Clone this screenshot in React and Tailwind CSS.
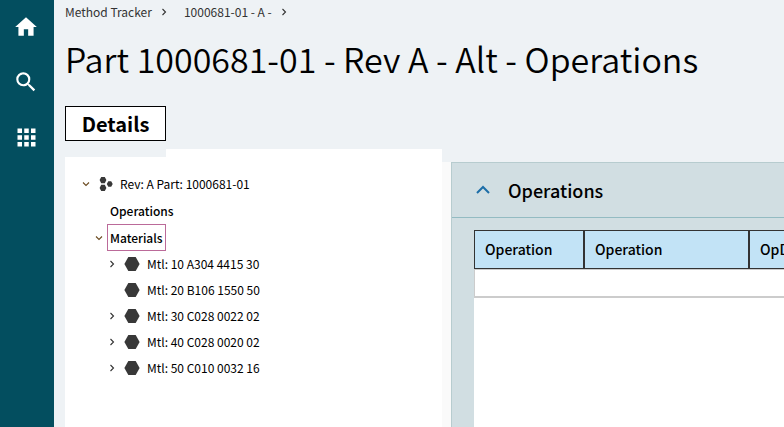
import { useState } from 'react'
import { MdHome, MdSearch, MdApps } from 'react-icons/md'

const MATERIALS = [
  { name: 'Mtl: 10 A304 4415 30', expandable: true },
  { name: 'Mtl: 20 B106 1550 50', expandable: false },
  { name: 'Mtl: 30 C028 0022 02', expandable: true },
  { name: 'Mtl: 40 C028 0020 02', expandable: true },
  { name: 'Mtl: 50 C010 0032 16', expandable: true },
]

const TURN = { right: 'M2.5 1l3 3-3 3', down: 'M1 2.5l3 3 3-3', up: 'M1 5.5l3-3 3 3' }

function Chevron({ dir, size = 8, width = 1.1, className = '' }) {
  return (
    <svg viewBox="0 0 8 8" width={size} height={size} fill="none" stroke="currentColor" strokeWidth={width} className={className} aria-hidden="true">
      <path d={TURN[dir]} />
    </svg>
  )
}

function Hexagon() {
  return (
    <svg viewBox="0 0 16 14" width="16" height="14" fill="#383838" aria-hidden="true">
      <path d="M4.3 0h7.4L15.6 7l-3.9 7H4.3L.4 7z" />
    </svg>
  )
}

// Three linked parts, shown next to the revision root.
function Assembly() {
  return (
    <svg viewBox="0 0 14 14" width="14" height="14" fill="#383838" aria-hidden="true">
      <path d="M2.2 0h3.6l1.6 3.1-1.6 3.1H2.2L.6 3.1zM2.2 7.8h3.6l1.6 3.1L5.8 14H2.2L.6 10.9zM9.3 4.2h2.9L13.7 7l-1.5 2.8H9.3L7.8 7z" />
    </svg>
  )
}

function Sidebar() {
  return (
    <nav className="flex w-[54px] shrink-0 flex-col items-center gap-[29px] bg-[#034e5f] pt-[14px] pr-[2px] text-white">
      <button type="button" aria-label="Home"><MdHome size={26} /></button>
      <button type="button" aria-label="Search"><MdSearch size={26} /></button>
      <button type="button" aria-label="Apps"><MdApps size={27} /></button>
    </nav>
  )
}

function Tree() {
  const [open, setOpen] = useState(true)

  return (
    <ul className="pt-[14px] text-[12px] leading-[26px]">
      <li>
        <div className="flex h-[26px] items-center pl-[17px]">
          <button type="button" aria-label="Collapse revision" className="text-[#6b4a20]"><Chevron dir="down" /></button>
          <span className="ml-[9px]"><Assembly /></span>
          <span className="ml-[7px]">Rev: A Part: 1000681-01</span>
        </div>
        <ul>
          <li className="flex h-[27px] items-center pl-[45px] font-medium">Operations</li>
          <li>
            <div className="flex h-[27px] items-center pl-[30px]">
              <button type="button" aria-label="Toggle materials" className="text-[#6b4a20]" onClick={() => setOpen(!open)}>
                <Chevron dir={open ? 'down' : 'right'} />
              </button>
              <span className="ml-1 border border-[#bb6a99] px-[2px] font-medium leading-[25px]">Materials</span>
            </div>
            {open && (
              <ul>
                {MATERIALS.map((m) => (
                  <li key={m.name} className="flex h-[26px] items-center pl-[43px]">
                    <span className="w-4">
                      {m.expandable && <button type="button" aria-label={`Expand ${m.name}`} className="block text-[#333]"><Chevron dir="right" /></button>}
                    </span>
                    <Hexagon />
                    <span className="ml-[7px]">{m.name}</span>
                  </li>
                ))}
              </ul>
            )}
          </li>
        </ul>
      </li>
    </ul>
  )
}

function OperationsPanel() {
  const head = 'h-[39px] border border-[#333] bg-[#c2e3f6] px-[10px] text-left font-medium'

  return (
    <section className="mt-[13px] flex min-w-0 flex-1 flex-col overflow-hidden border-t border-l border-[#b7cccf] bg-[#d1dee2]">
      <div className="flex h-[55px] shrink-0 items-center border-b border-[#93bbc2] pl-[23px]">
        <button type="button" aria-label="Collapse operations" className="text-[#1d6ea8]"><Chevron dir="up" size={16} width={1} /></button>
        <h2 className="ml-[17px] text-[18px] font-medium leading-6">Operations</h2>
      </div>
      <div className="ml-[22px] mt-3 flex-1 bg-white">
        <table className="w-[480px] table-fixed border-separate border-spacing-0 text-[14px]">
          <thead>
            <tr>
              <th className={`${head} w-[110px]`}>Operation</th>
              <th className={`${head} w-[165px]`}>Operation</th>
              <th className={head}>OpD</th>
            </tr>
          </thead>
          <tbody>
            <tr>
              <td colSpan={3} className="h-[29px] border border-b-2 border-[#ccc]" />
            </tr>
          </tbody>
        </table>
      </div>
    </section>
  )
}

export default function App() {
  return (
    <div className="flex min-h-screen overflow-hidden bg-[#eef2f5] font-['Noto_Sans_CJK_JP',sans-serif] text-black">
      <Sidebar />
      <main className="flex min-w-0 flex-1 flex-col pl-[11px]">
        <nav aria-label="Breadcrumb" className="flex h-6 items-center text-[12px] text-[#333]">
          <a href="#tracker">Method Tracker</a>
          <Chevron dir="right" className="ml-2" />
          <a href="#part" className="ml-4">1000681-01 - A -</a>
          <Chevron dir="right" className="ml-2" />
        </nav>
        <h1 className="mt-[11px] whitespace-nowrap text-[34px] font-[350] leading-[48px]">Part 1000681-01 - Rev A - Alt - Operations</h1>
        <div className="mt-[23px]">
          <button type="button" className="block h-[35px] w-[101px] border border-black bg-white text-[20px] font-bold leading-[33px]">Details</button>
        </div>
        <div className="mt-2 flex flex-1">
          <section className="w-[377px] shrink-0 bg-white">
            <div className="h-2 w-[101px] bg-[#eef2f5]" />
            <Tree />
          </section>
          <div className="mt-[13px] w-[9px] shrink-0 bg-[#fafafa]" />
          <OperationsPanel />
        </div>
      </main>
    </div>
  )
}
